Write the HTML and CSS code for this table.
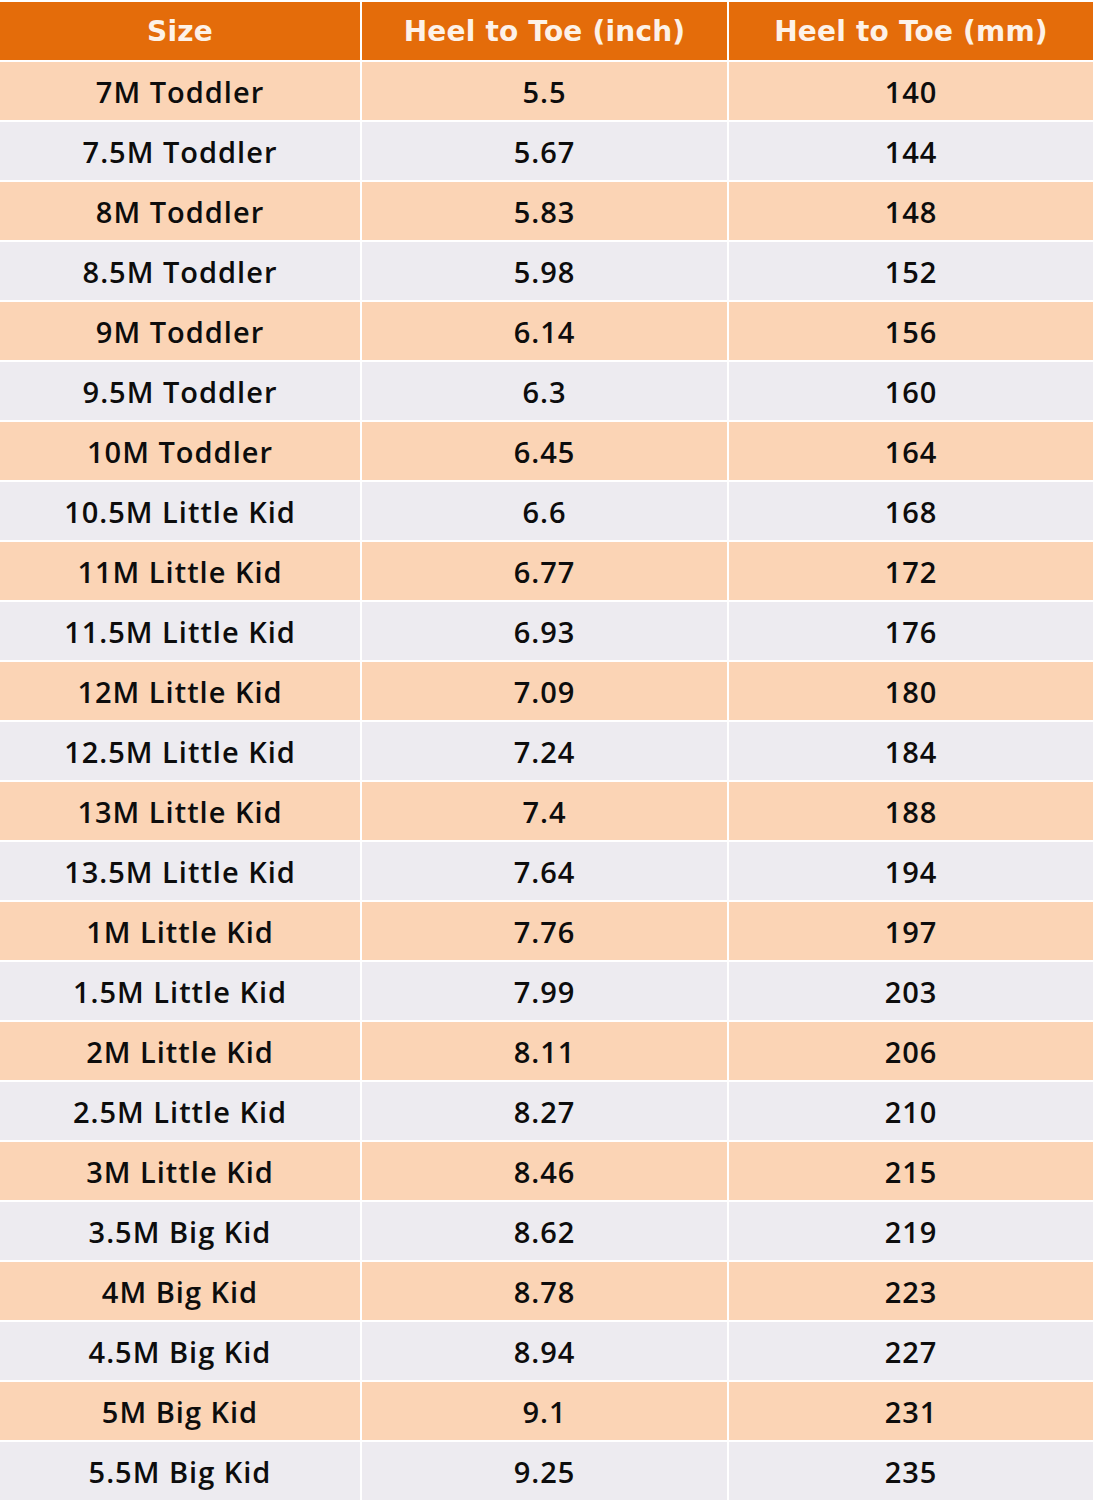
FILE: index.html
```html
<!DOCTYPE html>
<html>
<head>
<meta charset="utf-8">
<link rel="stylesheet" href="styles.css">
</head>
<body>
<div class="table">
  <div class="cell head">Size</div><div class="cell head">Heel to Toe (inch)</div><div class="cell head">Heel to Toe (mm)</div>
  <div class="cell o">7M Toddler</div><div class="cell o">5.5</div><div class="cell o">140</div>
  <div class="cell g">7.5M Toddler</div><div class="cell g">5.67</div><div class="cell g">144</div>
  <div class="cell o">8M Toddler</div><div class="cell o">5.83</div><div class="cell o">148</div>
  <div class="cell g">8.5M Toddler</div><div class="cell g">5.98</div><div class="cell g">152</div>
  <div class="cell o">9M Toddler</div><div class="cell o">6.14</div><div class="cell o">156</div>
  <div class="cell g">9.5M Toddler</div><div class="cell g">6.3</div><div class="cell g">160</div>
  <div class="cell o">10M Toddler</div><div class="cell o">6.45</div><div class="cell o">164</div>
  <div class="cell g">10.5M Little Kid</div><div class="cell g">6.6</div><div class="cell g">168</div>
  <div class="cell o">11M Little Kid</div><div class="cell o">6.77</div><div class="cell o">172</div>
  <div class="cell g">11.5M Little Kid</div><div class="cell g">6.93</div><div class="cell g">176</div>
  <div class="cell o">12M Little Kid</div><div class="cell o">7.09</div><div class="cell o">180</div>
  <div class="cell g">12.5M Little Kid</div><div class="cell g">7.24</div><div class="cell g">184</div>
  <div class="cell o">13M Little Kid</div><div class="cell o">7.4</div><div class="cell o">188</div>
  <div class="cell g">13.5M Little Kid</div><div class="cell g">7.64</div><div class="cell g">194</div>
  <div class="cell o">1M Little Kid</div><div class="cell o">7.76</div><div class="cell o">197</div>
  <div class="cell g">1.5M Little Kid</div><div class="cell g">7.99</div><div class="cell g">203</div>
  <div class="cell o">2M Little Kid</div><div class="cell o">8.11</div><div class="cell o">206</div>
  <div class="cell g">2.5M Little Kid</div><div class="cell g">8.27</div><div class="cell g">210</div>
  <div class="cell o">3M Little Kid</div><div class="cell o">8.46</div><div class="cell o">215</div>
  <div class="cell g">3.5M Big Kid</div><div class="cell g">8.62</div><div class="cell g">219</div>
  <div class="cell o">4M Big Kid</div><div class="cell o">8.78</div><div class="cell o">223</div>
  <div class="cell g">4.5M Big Kid</div><div class="cell g">8.94</div><div class="cell g">227</div>
  <div class="cell o">5M Big Kid</div><div class="cell o">9.1</div><div class="cell o">231</div>
  <div class="cell g">5.5M Big Kid</div><div class="cell g">9.25</div><div class="cell g">235</div>
</div>
</body>
</html>
```
FILE: styles.css
```css
html, body {
  margin: 0;
  padding: 0;
  background: #ffffff;
}
.table {
  display: grid;
  grid-template-columns: 360px 365px 364px;
  grid-auto-rows: 58px;
  column-gap: 2px;
  row-gap: 2px;
  padding-top: 2px;
  width: 1093px;
}
.cell {
  display: flex;
  align-items: center;
  justify-content: center;
  font-family: "Open Sans", "Noto Sans", sans-serif;
  font-weight: 600;
  font-size: 29px;
  color: #0d0d0d;
  letter-spacing: 1px;
}
.head {
  background: #e46c0a;
  color: #fdf2e8;
  font-family: "DejaVu Sans", sans-serif;
  font-weight: bold;
  font-size: 28px;
  letter-spacing: 0.2px;
}
.o {
  background: #fbd4b5;
}
.g {
  background: #edebf0;
}
```
